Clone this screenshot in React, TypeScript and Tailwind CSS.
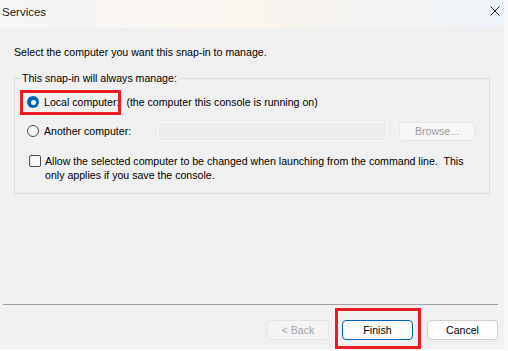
export default function App() {
  return (
    <div className="h-[351px] w-[508px] overflow-hidden bg-[#fafafa] font-['Liberation_Sans',Arial,sans-serif] text-[10.6px] leading-[13px] text-black">
      <div className="flex h-[349px] w-[504px] flex-col bg-[#f0f0f0]">
        {/* Title bar */}
        <div className="flex h-[28px] shrink-0 items-start justify-between bg-gradient-to-r from-[#f6f6f6] via-[#fbf5ef] to-[#eef3f8] pl-[2px] pr-[4px] pt-[5px]">
          <span className="text-[11.5px] leading-[14px] text-[#1a1a1a]">Services</span>
          <svg width="10" height="10" viewBox="0 0 10 10" className="mt-[1px]">
            <path d="M0.5 0.5 L9.5 9.5 M9.5 0.5 L0.5 9.5" stroke="#1f1f1f" strokeWidth="1" />
          </svg>
        </div>

        <p className="ml-[14px] mt-[18px]">Select the computer you want this snap-in to manage.</p>

        <fieldset className="ml-[14px] mt-[13px] w-[476px] border border-[#dcdcdc] pb-[11px] pl-[12px] pr-[12px] pt-[8px]">
          <legend className="-ml-[7px] px-[2px] leading-[13px]">This snap-in will always manage:</legend>

          {/* Local computer */}
          <div className="flex h-[18px] items-center">
            <div className="relative flex items-center">
              <span className="flex h-[12px] w-[12px] items-center justify-center rounded-full bg-[#005fb8]">
                <span className="h-[5px] w-[5px] rounded-full bg-white" />
              </span>
              <span className="ml-[5px]">Local computer:</span>
              <span className="pointer-events-none absolute -left-[7px] -top-[6px] h-[25px] w-[101px] border-[3px] border-[#e81c24]" />
            </div>
            <span className="ml-[7px]">(the computer this console is running on)</span>
          </div>

          {/* Another computer */}
          <div className="mt-[10px] flex h-[20px] items-center">
            <span className="h-[12px] w-[12px] rounded-full border border-[#4d4d4d] bg-[#f8f8f8]" />
            <span className="ml-[5px] w-[114px]">Another computer:</span>
            <div className="h-[19px] w-[229px] border border-[#fbfbfb] bg-[#efefef] shadow-[0_0_0_1px_#e9e9e9_inset]" />
            <div className="ml-[12px] flex h-[19px] w-[76px] items-center justify-center rounded-[4px] border border-[#e6e6e6] bg-[#f6f6f6] text-[#9d9d9d]">
              Browse...
            </div>
          </div>

          {/* Checkbox */}
          <div className="mt-[13px] flex items-start pl-[2px]">
            <span className="mt-[1px] h-[12px] w-[12px] shrink-0 rounded-[2px] border border-[#4d4d4d] bg-[#f8f8f8]" />
            <p className="ml-[4px] w-[425px] leading-[14px]">
              Allow the selected computer to be changed when launching from the command line.&nbsp; This only applies if you save the console.
            </p>
          </div>
        </fieldset>

        <div className="ml-[3px] mt-[110px] h-px w-[495px] bg-[#a0a0a0]" />

        {/* Buttons */}
        <div className="mt-[15px] flex items-center pl-[267px]">
          <div className="flex h-[20px] w-[62px] items-center justify-center rounded-[4px] border border-[#e5e5e5] bg-[#f5f5f5] text-[#a3a3a3]">
            &lt; Back
          </div>
          <div className="relative ml-[13px]">
            <div className="flex h-[20px] w-[71px] items-center justify-center rounded-[4px] border border-[#005fb8] bg-[#fdfdfd]">
              Finish
            </div>
            <span className="pointer-events-none absolute -left-[7px] -top-[12px] h-[41px] w-[86px] border-[3px] border-[#e81c24]" />
          </div>
          <div className="ml-[14px] flex h-[20px] w-[71px] items-center justify-center rounded-[4px] border border-[#d0d0d0] bg-[#fdfdfd]">
            Cancel
          </div>
        </div>
      </div>
    </div>
  );
}
